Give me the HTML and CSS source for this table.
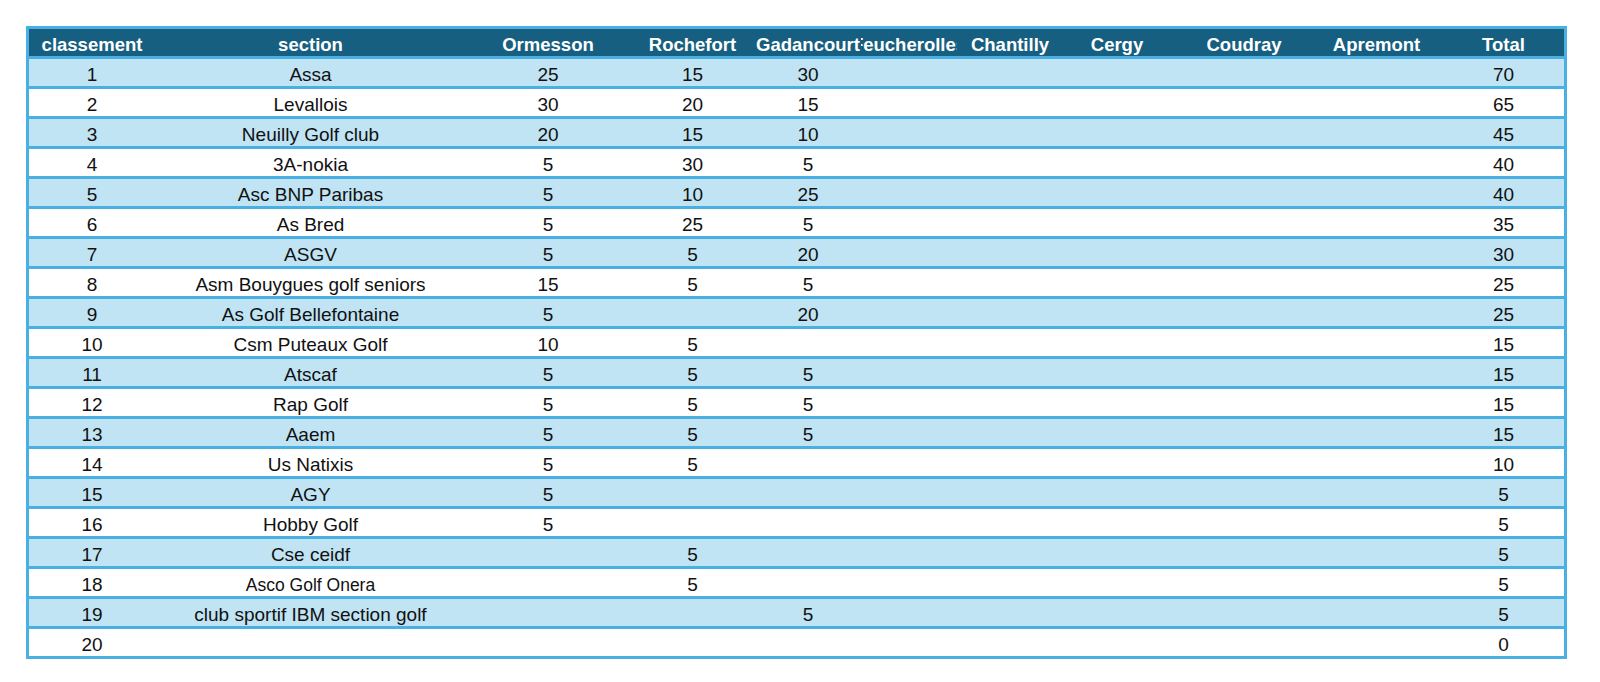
FILE: index.html
```html
<!DOCTYPE html>
<html lang="fr">
<head>
<meta charset="utf-8">
<title>Classement</title>
<link rel="stylesheet" href="styles.css">
</head>
<body>
<div class="page">
<table class="ranking">
  <colgroup>
    <col class="c-rank"><col class="c-section"><col class="c-orm"><col class="c-roc"><col class="c-gad"><col class="c-feu"><col class="c-cha"><col class="c-cer"><col class="c-cou"><col class="c-apr"><col class="c-tot">
  </colgroup>
  <thead>
    <tr>
      <th><div class="hd"><span>classement</span></div></th>
      <th><div class="hd"><span>section</span></div></th>
      <th><div class="hd"><span>Ormesson</span></div></th>
      <th><div class="hd"><span>Rochefort</span></div></th>
      <th><div class="hd"><span>Gadancourt</span></div></th>
      <th><div class="hd"><span>Feucherolles</span></div></th>
      <th><div class="hd"><span>Chantilly</span></div></th>
      <th><div class="hd"><span>Cergy</span></div></th>
      <th><div class="hd"><span>Coudray</span></div></th>
      <th><div class="hd"><span>Apremont</span></div></th>
      <th class="total"><div class="hd"><span>Total</span></div></th>
    </tr>
  </thead>
  <tbody>
    <tr class="alt"><td>1</td><td>Assa</td><td>25</td><td>15</td><td>30</td><td></td><td></td><td></td><td></td><td></td><td class="total">70</td></tr>
    <tr><td>2</td><td>Levallois</td><td>30</td><td>20</td><td>15</td><td></td><td></td><td></td><td></td><td></td><td class="total">65</td></tr>
    <tr class="alt"><td>3</td><td>Neuilly Golf club</td><td>20</td><td>15</td><td>10</td><td></td><td></td><td></td><td></td><td></td><td class="total">45</td></tr>
    <tr><td>4</td><td>3A-nokia</td><td>5</td><td>30</td><td>5</td><td></td><td></td><td></td><td></td><td></td><td class="total">40</td></tr>
    <tr class="alt"><td>5</td><td>Asc BNP Paribas</td><td>5</td><td>10</td><td>25</td><td></td><td></td><td></td><td></td><td></td><td class="total">40</td></tr>
    <tr><td>6</td><td>As Bred</td><td>5</td><td>25</td><td>5</td><td></td><td></td><td></td><td></td><td></td><td class="total">35</td></tr>
    <tr class="alt"><td>7</td><td>ASGV</td><td>5</td><td>5</td><td>20</td><td></td><td></td><td></td><td></td><td></td><td class="total">30</td></tr>
    <tr><td>8</td><td>Asm Bouygues golf seniors</td><td>15</td><td>5</td><td>5</td><td></td><td></td><td></td><td></td><td></td><td class="total">25</td></tr>
    <tr class="alt"><td>9</td><td>As Golf Bellefontaine</td><td>5</td><td></td><td>20</td><td></td><td></td><td></td><td></td><td></td><td class="total">25</td></tr>
    <tr><td>10</td><td>Csm Puteaux Golf</td><td>10</td><td>5</td><td></td><td></td><td></td><td></td><td></td><td></td><td class="total">15</td></tr>
    <tr class="alt"><td>11</td><td>Atscaf</td><td>5</td><td>5</td><td>5</td><td></td><td></td><td></td><td></td><td></td><td class="total">15</td></tr>
    <tr><td>12</td><td>Rap Golf</td><td>5</td><td>5</td><td>5</td><td></td><td></td><td></td><td></td><td></td><td class="total">15</td></tr>
    <tr class="alt"><td>13</td><td>Aaem</td><td>5</td><td>5</td><td>5</td><td></td><td></td><td></td><td></td><td></td><td class="total">15</td></tr>
    <tr><td>14</td><td>Us Natixis</td><td>5</td><td>5</td><td></td><td></td><td></td><td></td><td></td><td></td><td class="total">10</td></tr>
    <tr class="alt"><td>15</td><td>AGY</td><td>5</td><td></td><td></td><td></td><td></td><td></td><td></td><td></td><td class="total">5</td></tr>
    <tr><td>16</td><td>Hobby Golf</td><td>5</td><td></td><td></td><td></td><td></td><td></td><td></td><td></td><td class="total">5</td></tr>
    <tr class="alt"><td>17</td><td>Cse ceidf</td><td></td><td>5</td><td></td><td></td><td></td><td></td><td></td><td></td><td class="total">5</td></tr>
    <tr><td>18</td><td class="small">Asco Golf Onera</td><td></td><td>5</td><td></td><td></td><td></td><td></td><td></td><td></td><td class="total">5</td></tr>
    <tr class="alt"><td>19</td><td>club sportif IBM section golf</td><td></td><td></td><td>5</td><td></td><td></td><td></td><td></td><td></td><td class="total">5</td></tr>
    <tr class="last"><td>20</td><td></td><td></td><td></td><td></td><td></td><td></td><td></td><td></td><td></td><td class="total">0</td></tr>
  </tbody>
</table>
</div>
</body>
</html>
```

FILE: styles.css
```css
html, body {
  margin: 0;
  padding: 0;
  background: #ffffff;
}

.page {
  padding: 26px 0 0 26px;
}

.ranking {
  width: 1541px;
  table-layout: fixed;
  border-collapse: separate;
  border-spacing: 0;
  border: 3px solid #4ab0e3;
  font-family: "Liberation Sans", Arial, sans-serif;
  color: #111111;
}

.c-rank { width: 126px; }
.c-section { width: 311px; }
.c-orm { width: 164px; }
.c-roc { width: 125px; }
.c-gad { width: 106px; }
.c-feu { width: 96px; }
.c-cha { width: 106px; }
.c-cer { width: 108px; }
.c-cou { width: 146px; }
.c-apr { width: 119px; }
.c-tot { width: 128px; }

.ranking th,
.ranking td {
  box-sizing: border-box;
  height: 30px;
  padding: 0;
  border-bottom: 3px solid #4ab0e3;
  text-align: center;
  vertical-align: bottom;
  white-space: nowrap;
  overflow: hidden;
}

.ranking th {
  background: #175f80;
  color: #ffffff;
  font-weight: bold;
  font-size: 18.5px;
}

.hd {
  display: flex;
  justify-content: center;
  overflow: hidden;
  white-space: nowrap;
}

.ranking td {
  font-size: 19px;
  background: #ffffff;
}

.ranking tr.alt td {
  background: #c0e4f4;
}

.ranking tr.last td {
  height: 27px;
  border-bottom: 0;
}

.ranking .total {
  padding-left: 7px;
}

.ranking td.small {
  font-size: 17.5px;
}
```
